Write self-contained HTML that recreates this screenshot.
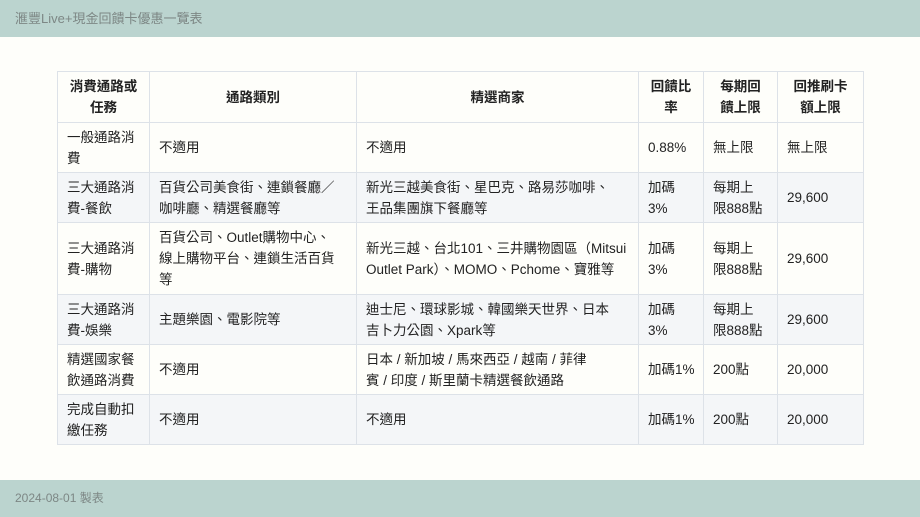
<!DOCTYPE html>
<html><head><meta charset="utf-8"><style>
*{margin:0;padding:0;box-sizing:border-box}
body{width:920px;height:517px;background:#fefefa;font-family:"Liberation Sans","Noto Sans CJK TC",sans-serif;position:relative;overflow:hidden;color:#222}
.top{position:absolute;left:0;top:0;width:920px;height:37px;background:#bbd4cf;color:#7d8785;font-size:13px;line-height:37px;padding-left:15px}
.bot{position:absolute;left:0;top:480px;width:920px;height:37px;background:#bbd4cf;color:#7d8785;font-size:12px;line-height:37px;padding-left:15px}
table{position:absolute;left:57px;top:71px;border-collapse:collapse;font-size:13.5px;line-height:21px;table-layout:fixed;width:806px}
td,th{border:1px solid #dde2e8;padding:0 9px;vertical-align:middle;text-align:left;font-weight:normal;white-space:nowrap}
th{font-weight:bold;text-align:center;height:51px}
tr.s td{background:#f4f6f8}
td{height:50px}
tr.t td{height:72px}
</style></head><body>
<div class="top">滙豐Live+現金回饋卡優惠一覽表</div>
<table>
<colgroup><col style="width:92px"><col style="width:207px"><col style="width:282px"><col style="width:65px"><col style="width:74px"><col style="width:86px"></colgroup>
<tr><th>消費通路或<br>任務</th><th>通路類別</th><th>精選商家</th><th>回饋比<br>率</th><th>每期回<br>饋上限</th><th>回推刷卡<br>額上限</th></tr>
<tr><td>一般通路消<br>費</td><td>不適用</td><td>不適用</td><td>0.88%</td><td>無上限</td><td>無上限</td></tr>
<tr class="s"><td>三大通路消<br>費-餐飲</td><td>百貨公司美食街、連鎖餐廳／<br>咖啡廳、精選餐廳等</td><td>新光三越美食街、星巴克、路易莎咖啡、<br>王品集團旗下餐廳等</td><td>加碼<br>3%</td><td>每期上<br>限888點</td><td>29,600</td></tr>
<tr class="t"><td>三大通路消<br>費-購物</td><td>百貨公司、Outlet購物中心、<br>線上購物平台、連鎖生活百貨<br>等</td><td>新光三越、台北101、三井購物園區（Mitsui<br>Outlet Park）、MOMO、Pchome、寶雅等</td><td>加碼<br>3%</td><td>每期上<br>限888點</td><td>29,600</td></tr>
<tr class="s"><td>三大通路消<br>費-娛樂</td><td>主題樂園、電影院等</td><td>迪士尼、環球影城、韓國樂天世界、日本<br>吉卜力公園、Xpark等</td><td>加碼<br>3%</td><td>每期上<br>限888點</td><td>29,600</td></tr>
<tr><td>精選國家餐<br>飲通路消費</td><td>不適用</td><td>日本 / 新加坡 / 馬來西亞 / 越南 / 菲律<br>賓 / 印度 / 斯里蘭卡精選餐飲通路</td><td>加碼1%</td><td>200點</td><td>20,000</td></tr>
<tr class="s"><td>完成自動扣<br>繳任務</td><td>不適用</td><td>不適用</td><td>加碼1%</td><td>200點</td><td>20,000</td></tr>
</table>
<div class="bot">2024-08-01 製表</div>
</body></html>
